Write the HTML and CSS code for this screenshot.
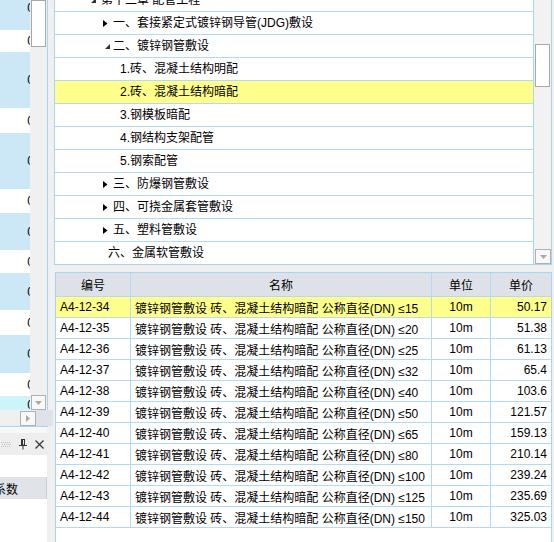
FILE: index.html
```html
<!DOCTYPE html>
<html lang="zh-CN">
<head>
<meta charset="utf-8">
<title>定额</title>
<link rel="stylesheet" href="styles.css">
</head>
<body>
<div class="app">
  <div class="left">
    <div class="lgrid">
      <div class="lbody">
        <div class="lcol">
          <div class="lrow blue h30 first"><span>0</span></div>
          <div class="lrow white h22"><span>0</span></div>
          <div class="lrow blue h56"><span>0</span></div>
          <div class="lrow white h25"><span>0</span></div>
          <div class="lrow blue h56"><span>0</span></div>
          <div class="lrow white h24"><span>0</span></div>
          <div class="lrow blue h37"><span>0</span></div>
          <div class="lrow white h23"><span>0</span></div>
          <div class="lrow blue h37"><span>0</span></div>
          <div class="lrow white h25"><span>0</span></div>
          <div class="lrow blue h38"><span>0</span></div>
          <div class="lrow white h23"><span>0</span></div>
          <div class="lrow cyan h18"><span>0</span></div>
        </div>
        <div class="vscroll">
          <div class="vthumb"></div>
          <div class="sbtn down">
            <svg width="7" height="4" viewBox="0 0 7 4"><polygon points="0,0 7,0 3.5,4" fill="#a8a8a8"/></svg>
          </div>
        </div>
      </div>
      <div class="hscroll">
        <div class="htrack"></div>
        <div class="sbtn right">
          <svg width="4" height="7" viewBox="0 0 4 7"><polygon points="0,0 4,3.5 0,7" fill="#a8a8a8"/></svg>
        </div>
        <div class="corner"></div>
      </div>
    </div>
    <div class="lgap"></div>
    <div class="titlebar">
      <svg class="grip" width="10" height="5" viewBox="0 0 10 5">
        <g fill="#bdbdbd">
          <rect x="0" y="0" width="1" height="1"/><rect x="2" y="0" width="1" height="1"/><rect x="4" y="0" width="1" height="1"/><rect x="6" y="0" width="1" height="1"/><rect x="8" y="0" width="1" height="1"/>
          <rect x="1" y="2" width="1" height="1"/><rect x="3" y="2" width="1" height="1"/><rect x="5" y="2" width="1" height="1"/><rect x="7" y="2" width="1" height="1"/><rect x="9" y="2" width="1" height="1"/>
          <rect x="0" y="4" width="1" height="1"/><rect x="2" y="4" width="1" height="1"/><rect x="4" y="4" width="1" height="1"/><rect x="6" y="4" width="1" height="1"/><rect x="8" y="4" width="1" height="1"/>
        </g>
      </svg>
      <svg class="pin" width="10" height="12" viewBox="0 0 10 12">
        <g fill="none" stroke="#333" stroke-width="1">
          <rect x="3.5" y="1.5" width="3" height="5.5"/>
          <line x1="1" y1="7.5" x2="9" y2="7.5"/>
          <line x1="5" y1="7.5" x2="5" y2="11.5"/>
        </g>
        <rect x="3" y="1" width="2" height="6.5" fill="#333"/>
      </svg>
      <svg class="close" width="9" height="9" viewBox="0 0 9 9">
        <g stroke="#3a3a3a" stroke-width="1.3"><line x1="0.5" y1="0.5" x2="8.5" y2="8.5"/><line x1="8.5" y1="0.5" x2="0.5" y2="8.5"/></g>
      </svg>
    </div>
    <div class="lwhite"></div>
    <div class="lhead"><span>系数</span></div>
    <div class="lrest"></div>
  </div>

  <div class="right">
    <div class="tree">
      <div class="tlist">
        <div class="trow top l1">
          <div class="tinner">
            <span class="tw"><svg width="5" height="5" viewBox="0 0 5 5"><polygon points="5,0 5,5 0,5" fill="#333"/></svg></span>
            <span class="tt">第十二章 配管工程</span>
          </div>
        </div>
        <div class="trow l2">
          <span class="tw"><svg width="5" height="7" viewBox="0 0 5 7"><polygon points="0,0 4.5,3.5 0,7" fill="#000"/></svg></span>
          <span class="tt">一、套接紧定式镀锌钢导管(JDG)敷设</span>
        </div>
        <div class="trow l2">
          <span class="tw open"><svg width="5" height="5" viewBox="0 0 5 5"><polygon points="5,0 5,5 0,5" fill="#333"/></svg></span>
          <span class="tt">二、镀锌钢管敷设</span>
        </div>
        <div class="trow l3"><span class="tt">1.砖、混凝土结构明配</span></div>
        <div class="trow l3 sel"><span class="tt">2.砖、混凝土结构暗配</span></div>
        <div class="trow l3"><span class="tt">3.钢模板暗配</span></div>
        <div class="trow l3"><span class="tt">4.钢结构支架配管</span></div>
        <div class="trow l3"><span class="tt">5.钢索配管</span></div>
        <div class="trow l2">
          <span class="tw"><svg width="5" height="7" viewBox="0 0 5 7"><polygon points="0,0 4.5,3.5 0,7" fill="#000"/></svg></span>
          <span class="tt">三、防爆钢管敷设</span>
        </div>
        <div class="trow l2">
          <span class="tw"><svg width="5" height="7" viewBox="0 0 5 7"><polygon points="0,0 4.5,3.5 0,7" fill="#000"/></svg></span>
          <span class="tt">四、可挠金属套管敷设</span>
        </div>
        <div class="trow l2">
          <span class="tw"><svg width="5" height="7" viewBox="0 0 5 7"><polygon points="0,0 4.5,3.5 0,7" fill="#000"/></svg></span>
          <span class="tt">五、塑料管敷设</span>
        </div>
        <div class="trow l2leaf last"><span class="tt">六、金属软管敷设</span></div>
      </div>
      <div class="tscroll">
        <div class="tthumb"></div>
        <div class="sbtn tdown">
          <svg width="7" height="4" viewBox="0 0 7 4"><polygon points="0,0 7,0 3.5,4" fill="#a8a8a8"/></svg>
        </div>
      </div>
    </div>

    <div class="table-panel">
      <div class="tbl">
        <div class="th">编号</div><div class="th">名称</div><div class="th">单位</div><div class="th last">单价</div>

        <div class="td code sel">A4-12-34</div><div class="td name sel">镀锌钢管敷设 砖、混凝土结构暗配 公称直径(DN) ≤15</div><div class="td unit sel">10m</div><div class="td price sel">50.17</div>
        <div class="td code">A4-12-35</div><div class="td name">镀锌钢管敷设 砖、混凝土结构暗配 公称直径(DN) ≤20</div><div class="td unit">10m</div><div class="td price">51.38</div>
        <div class="td code">A4-12-36</div><div class="td name">镀锌钢管敷设 砖、混凝土结构暗配 公称直径(DN) ≤25</div><div class="td unit">10m</div><div class="td price">61.13</div>
        <div class="td code">A4-12-37</div><div class="td name">镀锌钢管敷设 砖、混凝土结构暗配 公称直径(DN) ≤32</div><div class="td unit">10m</div><div class="td price">65.4</div>
        <div class="td code">A4-12-38</div><div class="td name">镀锌钢管敷设 砖、混凝土结构暗配 公称直径(DN) ≤40</div><div class="td unit">10m</div><div class="td price">103.6</div>
        <div class="td code">A4-12-39</div><div class="td name">镀锌钢管敷设 砖、混凝土结构暗配 公称直径(DN) ≤50</div><div class="td unit">10m</div><div class="td price">121.57</div>
        <div class="td code">A4-12-40</div><div class="td name">镀锌钢管敷设 砖、混凝土结构暗配 公称直径(DN) ≤65</div><div class="td unit">10m</div><div class="td price">159.13</div>
        <div class="td code">A4-12-41</div><div class="td name">镀锌钢管敷设 砖、混凝土结构暗配 公称直径(DN) ≤80</div><div class="td unit">10m</div><div class="td price">210.14</div>
        <div class="td code">A4-12-42</div><div class="td name">镀锌钢管敷设 砖、混凝土结构暗配 公称直径(DN) ≤100</div><div class="td unit">10m</div><div class="td price">239.24</div>
        <div class="td code">A4-12-43</div><div class="td name">镀锌钢管敷设 砖、混凝土结构暗配 公称直径(DN) ≤125</div><div class="td unit">10m</div><div class="td price">235.69</div>
        <div class="td code">A4-12-44</div><div class="td name">镀锌钢管敷设 砖、混凝土结构暗配 公称直径(DN) ≤150</div><div class="td unit">10m</div><div class="td price">325.03</div>
      </div>
    </div>
  </div>
</div>
</body>
</html>
```

FILE: styles.css
```css
* { box-sizing: border-box; }
html, body { margin: 0; padding: 0; }
body {
  width: 554px;
  height: 542px;
  overflow: hidden;
  background: #f0f0f0;
  font-family: "Liberation Sans", "Noto Sans CJK SC", sans-serif;
  font-size: 12px;
  color: #000;
}
.app { display: flex; height: 542px; }

/* ---------- left panel ---------- */
.left { width: 48px; flex: none; display: flex; flex-direction: column; }
.lgrid {
  height: 427px;
  flex: none;
  border-right: 1px solid #a9d4f2;
  border-bottom: 1px solid #a9d4f2;
  display: flex;
  flex-direction: column;
  background: #fff;
}
.lbody { height: 410px; flex: none; display: flex; overflow: hidden; }
.lcol { width: 30px; flex: none; display: flex; flex-direction: column; overflow: hidden; }
.lrow { flex: none; display: flex; align-items: center; justify-content: flex-end; overflow: hidden; }
.lrow span { margin-right: -4px; line-height: 14px; }
.lrow.first { align-items: flex-start; padding-top: 1px; }
.lrow.blue { background: #cce8f6; }
.lrow.white { background: #fff; }
.lrow.cyan { background: #cdf3fb; }
.h18 { height: 18px; }
.h22 { height: 22px; }
.h23 { height: 23px; }
.h24 { height: 24px; }
.h25 { height: 25px; }
.h30 { height: 30px; }
.h37 { height: 37px; }
.h38 { height: 38px; }
.h56 { height: 56px; }

.vscroll { width: 17px; flex: none; background: #f0f0f0; display: flex; flex-direction: column; }
.vthumb { width: 15px; height: 47px; margin-left: 1px; background: #fff; border: 1px solid #a8a8a8; }
.sbtn {
  display: flex; align-items: center; justify-content: center;
  background: #f8f8f8; border: 1px solid #b0b0b0;
}
.sbtn.down { width: 15px; height: 15px; margin: auto 0 0 1px; }
.hscroll { height: 16px; flex: none; display: flex; background: #f0f0f0; }
.htrack { width: 14px; flex: none; }
.sbtn.right { width: 16px; height: 15px; margin-top: 1px; }
.corner { width: 17px; flex: none; background: #dfe3e9; }

.lgap { height: 6px; width: 47px; background: #f8f8f8; flex: none; }
.titlebar {
  height: 22px; width: 47px; flex: none;
  background: #eeeeee;
  display: flex; align-items: center;
  padding-left: 1px;
}
.titlebar .pin { margin-left: 7px; }
.titlebar .close { margin-left: 7px; }
.lwhite { height: 22px; width: 47px; background: #fff; flex: none; }
.lhead {
  height: 22px; width: 47px; flex: none;
  background: #e0e3e8;
  border-right: 1px solid #c9ced6;
  display: flex; align-items: center;
  overflow: hidden; white-space: nowrap;
}
.lhead span { margin-left: -6px; }
.lrest { flex: 1; width: 47px; background: #fff; }

/* ---------- right side ---------- */
.right { width: 498px; margin-left: 6px; flex: none; display: flex; flex-direction: column; }

.tree {
  height: 265px; flex: none;
  border: 1px solid #a9d4f2; border-top: none;
  display: flex; background: #fff;
}
.tlist { width: 478px; flex: none; display: flex; flex-direction: column; }
.trow {
  height: 23px; flex: none;
  border-bottom: 1px solid #b3daf5;
  display: flex; align-items: center;
  white-space: nowrap;
}
.trow.top { height: 12px; align-items: flex-end; overflow: hidden; }
.tinner { height: 22px; flex: none; display: flex; align-items: center; }
.trow.last { height: 22px; border-bottom: none; }
.trow.sel { background: #ffff8c; }
.l1 { padding-left: 36px; }
.l2 { padding-left: 48px; }
.l2leaf { padding-left: 53px; }
.l3 { padding-left: 65px; }
.tw { width: 10px; flex: none; display: flex; align-items: center; }
.tw.open svg { margin-left: 2px; }
.tw svg { display: block; }
.tt { line-height: 16px; }

.tscroll {
  width: 18px; flex: none;
  border-left: 1px solid #a9d4f2;
  background: #f2f2f2;
  display: flex; flex-direction: column;
}
.tthumb { width: 15px; height: 43px; margin: 44px 0 0 1px; background: #fff; border: 1px solid #a8a8a8; }
.sbtn.tdown { width: 16px; height: 15px; margin: auto 0 0 1px; }

.table-panel {
  margin-top: 7px; margin-left: 1px;
  width: 497px; flex: 1;
  border: 1px solid #a9d4f2; border-bottom: none;
  background: #fff;
}
.tbl { display: grid; grid-template-columns: 75px 301px 59px 60px; }
.th {
  height: 24px;
  background: #dee2e8;
  border-right: 1px solid #b3daf5;
  border-bottom: 1px solid #b3daf5;
  display: flex; align-items: center; justify-content: center;
}
.th.last, .td.price { border-right: none; }
.td {
  height: 21px;
  border-right: 1px solid #b3daf5;
  border-bottom: 1px solid #b3daf5;
  display: flex; align-items: center;
  white-space: nowrap; overflow: hidden;
}
.td.sel { background: #ffff8c; }
.td.code { padding-left: 4px; }
.td.name { padding-left: 4px; }
.td.unit { justify-content: center; }
.td.price { justify-content: flex-end; padding-right: 4px; }
```
